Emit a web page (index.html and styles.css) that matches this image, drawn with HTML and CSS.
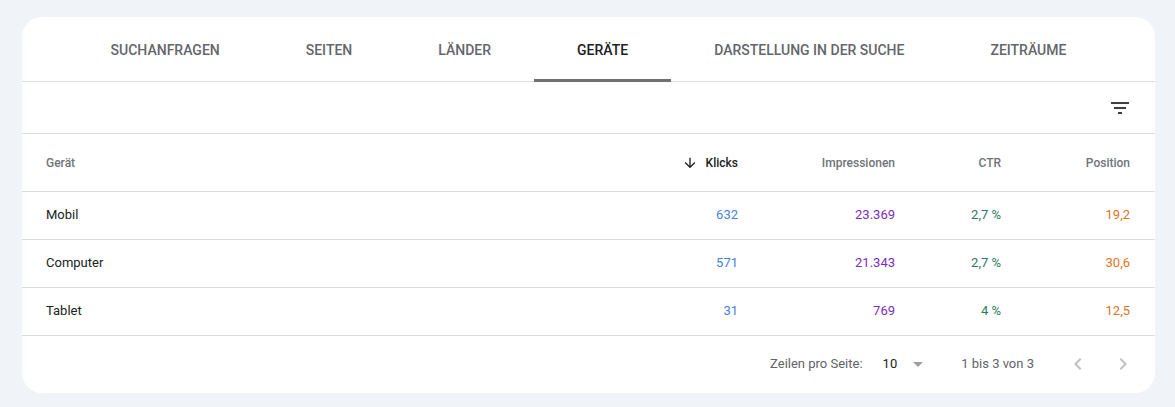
FILE: index.html
```html
<!DOCTYPE html>
<html lang="de">
<head>
<meta charset="utf-8">
<title>Geräte</title>
<link rel="stylesheet" href="styles.css">
</head>
<body>
<div class="card">
  <nav class="tabs">
    <div class="tab">SUCHANFRAGEN</div>
    <div class="tab">SEITEN</div>
    <div class="tab">LÄNDER</div>
    <div class="tab active">GERÄTE</div>
    <div class="tab">DARSTELLUNG IN DER SUCHE</div>
    <div class="tab">ZEITRÄUME</div>
  </nav>
  <div class="toolbar">
    <svg class="icon filter" viewBox="0 0 24 24" width="24" height="24"><path d="M10 18h4v-2h-4v2zM3 6v2h18V6H3zm3 7h12v-2H6v2z"/></svg>
  </div>
  <div class="grid head">
    <div class="c first">Gerät</div>
    <div class="c num sorted"><svg class="arrow" viewBox="0 0 24 24" width="16" height="16"><path d="M20 12l-1.41-1.41L13 16.17V4h-2v12.17l-5.58-5.59L4 12l8 8 8-8z"/></svg>Klicks</div>
    <div class="c num">Impressionen</div>
    <div class="c num">CTR</div>
    <div class="c num">Position</div>
  </div>
  <div class="grid row">
    <div class="c first">Mobil</div>
    <div class="c num clicks">632</div>
    <div class="c num impr">23.369</div>
    <div class="c num ctr">2,7 %</div>
    <div class="c num pos">19,2</div>
  </div>
  <div class="grid row">
    <div class="c first">Computer</div>
    <div class="c num clicks">571</div>
    <div class="c num impr">21.343</div>
    <div class="c num ctr">2,7 %</div>
    <div class="c num pos">30,6</div>
  </div>
  <div class="grid row">
    <div class="c first">Tablet</div>
    <div class="c num clicks">31</div>
    <div class="c num impr">769</div>
    <div class="c num ctr">4 %</div>
    <div class="c num pos">12,5</div>
  </div>
  <div class="footer">
    <span class="label">Zeilen pro Seite:</span>
    <span class="perpage">10</span>
    <svg class="icon drop" viewBox="0 0 24 24" width="24" height="24"><path d="M7 10l5 5 5-5z"/></svg>
    <span class="range">1 bis 3 von 3</span>
    <svg class="icon chev prev" viewBox="0 0 24 24" width="24" height="24"><path d="M15.41 7.41L14 6l-6 6 6 6 1.41-1.41L10.83 12z"/></svg>
    <svg class="icon chev next" viewBox="0 0 24 24" width="24" height="24"><path d="M10 6L8.59 7.41 13.17 12l-4.58 4.59L10 18l6-6z"/></svg>
  </div>
</div>
</body>
</html>
```
FILE: styles.css
```css
* { box-sizing: border-box; }
html, body {
  margin: 0;
  background: #f0f3f8;
}
body {
  padding: 17px 20px 0 22px;
  font-family: Roboto, "Liberation Sans", Arial, sans-serif;
  color: #202124;
}
.card {
  width: 1133px;
  height: 376px;
  background: #fff;
  border-radius: 20px;
  overflow: hidden;
}
.tabs {
  display: flex;
  justify-content: center;
  height: 65px;
  border-bottom: 1px solid #dadce0;
}
.tab {
  display: flex;
  align-items: center;
  padding: 3px 43px 0;
  font-size: 14px;
  font-weight: 500;
  color: #63666a;
  border-bottom: 3px solid transparent;
  margin-bottom: -1px;
}
.tab.active {
  color: #202124;
  border-bottom-color: #707070;
}
.toolbar {
  display: flex;
  justify-content: flex-end;
  align-items: center;
  height: 52px;
  padding-right: 23px;
  border-bottom: 1px solid #dadce0;
}
.icon { display: block; }
.filter { fill: #3c4043; }
.grid {
  display: grid;
  grid-template-columns: 1fr 120px 157px 106px 129px;
  padding: 0 25px 0 24px;
  align-items: center;
  border-bottom: 1px solid #dadce0;
}
.head {
  height: 58px;
  font-size: 12px;
  font-weight: 500;
  color: #6f7378;
}
.row {
  height: 48px;
  padding-bottom: 2px;
  font-size: 13px;
  color: #202124;
}
.c.num {
  text-align: right;
}
.sorted {
  display: flex;
  justify-content: flex-end;
  align-items: center;
  gap: 8px;
  color: #202124;
}
.arrow { fill: #202124; }
.clicks { color: #4a7fdc; }
.impr { color: #7b2cbf; }
.ctr { color: #2a7b5e; }
.pos { color: #e0731e; }
.footer {
  display: flex;
  justify-content: flex-end;
  align-items: center;
  height: 55px;
  padding-right: 20px;
  font-size: 13px;
  color: #5f6368;
}
.perpage {
  margin-left: 20px;
  color: #202124;
}
.drop {
  margin-left: 9px;
  fill: #9aa0a6;
}
.range {
  margin-left: 31px;
  color: #5f6368;
}
.chev { fill: #bdc1c6; }
.prev { margin-left: 32px; }
.next { margin-left: 21px; }
```
